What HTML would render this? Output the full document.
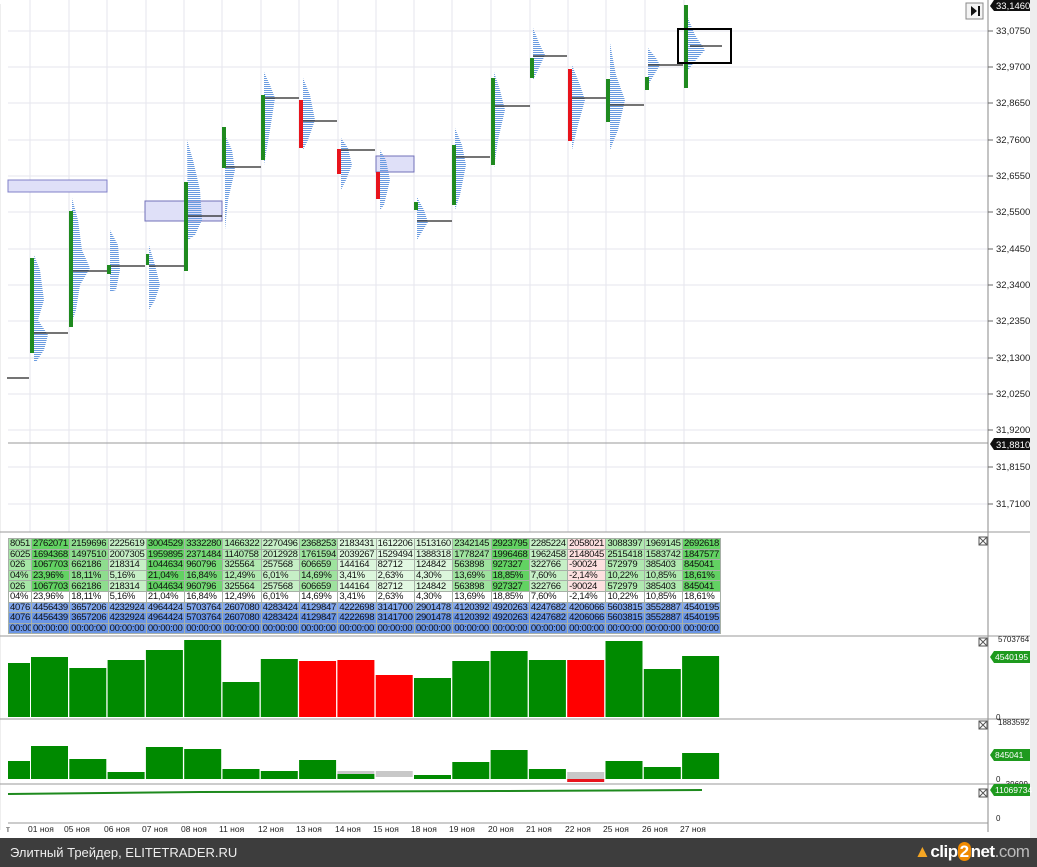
<!DOCTYPE html>
<html><head><meta charset="utf-8"><style>
body{margin:0;width:1037px;height:867px;overflow:hidden;background:#fff;font-family:"Liberation Sans",sans-serif;position:relative}
svg{position:absolute;left:0;top:0}
table{position:absolute;left:8px;top:538px;width:712px;border-collapse:collapse;table-layout:fixed;font-size:9.5px;letter-spacing:-0.3px;font-family:"Liberation Sans",sans-serif;}
td{border:1px solid #a7b0a7;height:9.6px;padding:0 0 0 1px;line-height:9px;overflow:hidden;white-space:nowrap;color:#111}
tr.w td{background:#fff}
tr.b1 td{background:#82a8ee}
tr.b2 td{background:#6a95e6}
.foot{position:absolute;left:0;top:838px;width:1037px;height:29px;background:#3d3d3d;color:#eee;font-size:13px}
</style></head><body>
<svg width="1037" height="867">
<defs>
<pattern id="pf" width="4" height="2" patternUnits="userSpaceOnUse"><rect width="4" height="1" fill="#6a9be0"/></pattern>
</defs>
<g stroke="#e6e6ee" stroke-width="1">
<line x1="8" y1="31" x2="988" y2="31"/><line x1="8" y1="67" x2="988" y2="67"/><line x1="8" y1="103" x2="988" y2="103"/><line x1="8" y1="140" x2="988" y2="140"/><line x1="8" y1="176" x2="988" y2="176"/><line x1="8" y1="212" x2="988" y2="212"/><line x1="8" y1="249" x2="988" y2="249"/><line x1="8" y1="285" x2="988" y2="285"/><line x1="8" y1="321" x2="988" y2="321"/><line x1="8" y1="358" x2="988" y2="358"/><line x1="8" y1="394" x2="988" y2="394"/><line x1="8" y1="430" x2="988" y2="430"/><line x1="8" y1="467" x2="988" y2="467"/><line x1="8" y1="504" x2="988" y2="504"/>
<line x1="30" y1="0" x2="30" y2="532"/><line x1="69" y1="0" x2="69" y2="532"/><line x1="107" y1="0" x2="107" y2="532"/><line x1="146" y1="0" x2="146" y2="532"/><line x1="184" y1="0" x2="184" y2="532"/><line x1="222" y1="0" x2="222" y2="532"/><line x1="261" y1="0" x2="261" y2="532"/><line x1="299" y1="0" x2="299" y2="532"/><line x1="338" y1="0" x2="338" y2="532"/><line x1="376" y1="0" x2="376" y2="532"/><line x1="414" y1="0" x2="414" y2="532"/><line x1="452" y1="0" x2="452" y2="532"/><line x1="491" y1="0" x2="491" y2="532"/><line x1="530" y1="0" x2="530" y2="532"/><line x1="568" y1="0" x2="568" y2="532"/><line x1="606" y1="0" x2="606" y2="532"/><line x1="645" y1="0" x2="645" y2="532"/><line x1="684" y1="0" x2="684" y2="532"/>
</g>
<line x1="0" y1="4" x2="0" y2="830" stroke="#ddd"/>
<rect x="8" y="180" width="99" height="12" fill="#dfe0f8" stroke="#8080c8"/>
<rect x="145" y="201" width="77" height="20" fill="#dfe0f8" stroke="#7070b8"/>
<rect x="376" y="156" width="38" height="16" fill="#dfe0f8" stroke="#7070b8"/>
<g fill="url(#pf)">
<polygon points="34,255 40,270 44,300 38,320 48,335 44,350 36,362 34,362"/>
<polygon points="72,198 78,220 82,250 90,268 80,285 76,310 72,322"/>
<polygon points="110,230 118,245 120,270 116,290 110,292"/>
<polygon points="149,245 155,265 160,285 155,300 149,310"/>
<polygon points="187,140 193,160 200,190 202,220 195,235 188,240"/>
<polygon points="225,135 232,150 235,170 228,200 225,230"/>
<polygon points="264,72 270,85 275,98 270,130 264,165"/>
<polygon points="303,78 310,95 315,120 308,140 303,150"/>
<polygon points="341,138 348,148 352,165 346,180 341,190"/>
<polygon points="380,150 386,160 390,180 384,205 380,210"/>
<polygon points="417,197 424,210 428,222 420,235 417,240"/>
<polygon points="455,128 462,145 466,165 460,195 455,210"/>
<polygon points="494,72 500,90 505,110 498,140 494,168"/>
<polygon points="533,28 540,45 545,55 538,70 533,80"/>
<polygon points="572,65 580,85 585,100 578,125 572,150"/>
<polygon points="610,43 616,75 625,100 618,130 610,150"/>
<polygon points="648,48 656,58 660,65 654,75 648,85"/>
<polygon points="688,18 695,35 705,50 696,60 688,70"/>
</g>
<g stroke="#222" stroke-width="1.2">
<line x1="7" y1="378" x2="29" y2="378"/>
<line x1="34" y1="333" x2="68" y2="333"/>
<line x1="72" y1="271" x2="107" y2="271"/>
<line x1="110" y1="266" x2="145" y2="266"/>
<line x1="149" y1="266" x2="184" y2="266"/>
<line x1="187" y1="216" x2="222" y2="216"/>
<line x1="226" y1="167" x2="261" y2="167"/>
<line x1="264" y1="98" x2="299" y2="98"/>
<line x1="303" y1="121" x2="337" y2="121"/>
<line x1="341" y1="150" x2="375" y2="150"/>
<line x1="417" y1="221" x2="452" y2="221"/>
<line x1="456" y1="157" x2="490" y2="157"/>
<line x1="494" y1="106" x2="530" y2="106"/>
<line x1="533" y1="56" x2="567" y2="56"/>
<line x1="572" y1="98" x2="606" y2="98"/>
<line x1="610" y1="105" x2="644" y2="105"/>
<line x1="648" y1="65" x2="683" y2="65"/>
<line x1="690" y1="46" x2="722" y2="46"/>
</g>
<g fill="#1f8a1f">
<rect x="30" y="258" width="4" height="95"/><rect x="69" y="211" width="4" height="116"/><rect x="107" y="265" width="4" height="9"/><rect x="146" y="254" width="3" height="11"/><rect x="184" y="182" width="4" height="89"/><rect x="222" y="127" width="4" height="41"/><rect x="261" y="95" width="4" height="65"/><rect x="414" y="202" width="4" height="8"/><rect x="452" y="145" width="4" height="60"/><rect x="491" y="78" width="4" height="87"/><rect x="530" y="58" width="4" height="20"/><rect x="606" y="79" width="4" height="43"/><rect x="645" y="77" width="4" height="13"/><rect x="684" y="5" width="4" height="83"/>
</g>
<g fill="#e8141c"><rect x="299" y="100" width="4" height="48"/><rect x="337" y="149" width="4" height="25"/><rect x="376" y="172" width="4" height="27"/><rect x="568" y="69" width="4" height="72"/></g>
<rect x="678" y="29" width="53" height="34" fill="none" stroke="#000" stroke-width="2"/>
<line x1="8" y1="443" x2="988" y2="443" stroke="#999"/>
<line x1="988" y1="0" x2="988" y2="832" stroke="#888"/>
<rect x="1030" y="0" width="7" height="838" fill="#eee"/>
<g font-size="9.5" fill="#222">
<text x="996" y="34">33,0750</text><text x="996" y="70">32,9700</text><text x="996" y="106">32,8650</text><text x="996" y="143">32,7600</text><text x="996" y="179">32,6550</text><text x="996" y="215">32,5500</text><text x="996" y="252">32,4450</text><text x="996" y="288">32,3400</text><text x="996" y="324">32,2350</text><text x="996" y="361">32,1300</text><text x="996" y="397">32,0250</text><text x="996" y="433">31,9200</text><text x="996" y="470">31,8150</text><text x="996" y="507">31,7100</text>
</g>
<g stroke="#666"><line x1="988" y1="31" x2="993" y2="31"/><line x1="988" y1="67" x2="993" y2="67"/><line x1="988" y1="103" x2="993" y2="103"/><line x1="988" y1="140" x2="993" y2="140"/><line x1="988" y1="176" x2="993" y2="176"/><line x1="988" y1="212" x2="993" y2="212"/><line x1="988" y1="249" x2="993" y2="249"/><line x1="988" y1="285" x2="993" y2="285"/><line x1="988" y1="321" x2="993" y2="321"/><line x1="988" y1="358" x2="993" y2="358"/><line x1="988" y1="394" x2="993" y2="394"/><line x1="988" y1="430" x2="993" y2="430"/><line x1="988" y1="467" x2="993" y2="467"/><line x1="988" y1="504" x2="993" y2="504"/></g>
<path d="M990,6 L994,0 L1030,0 L1030,11 L994,11 Z" fill="#111"/><text x="996" y="9" font-size="9.5" fill="#fff">33,1460</text>
<path d="M990,444 L994,438 L1030,438 L1030,450 L994,450 Z" fill="#111"/><text x="996" y="448" font-size="9.5" fill="#fff">31,8810</text>
<rect x="966" y="3" width="17" height="16" fill="#f4f4f4" stroke="#888"/><path d="M971,6 L977,11 L971,16 Z M978,6 h2 v10 h-2 Z" fill="#111"/>
<g stroke="#999"><line x1="0" y1="532" x2="1030" y2="532"/><line x1="0" y1="636" x2="1030" y2="636"/><line x1="0" y1="719" x2="1030" y2="719"/><line x1="0" y1="784" x2="1030" y2="784"/><line x1="8" y1="823" x2="988" y2="823"/></g>
<g fill="#fff" stroke="#555"><rect x="979" y="537" width="8" height="8"/><rect x="979" y="638" width="8" height="8"/><rect x="979" y="721" width="8" height="8"/><rect x="979" y="789" width="8" height="8"/></g>
<g stroke="#555"><path d="M979,537 l8,8 M987,537 l-8,8 M979,638 l8,8 M987,638 l-8,8 M979,721 l8,8 M987,721 l-8,8 M979,789 l8,8 M987,789 l-8,8"/></g>
<!-- volume -->
<g fill="#008a00">
<rect x="8" y="663" width="22" height="54"/>
<rect x="31" y="657" width="37" height="60"/><rect x="69.3" y="668" width="37" height="49"/><rect x="107.6" y="660" width="37" height="57"/><rect x="145.9" y="650" width="37" height="67"/><rect x="184.2" y="640" width="37" height="77"/><rect x="222.5" y="682" width="37" height="35"/><rect x="260.8" y="659" width="37" height="58"/><rect x="414" y="678" width="37" height="39"/><rect x="452.3" y="661" width="37" height="56"/><rect x="490.6" y="651" width="37" height="66"/><rect x="528.9" y="660" width="37" height="57"/><rect x="605.5" y="641" width="37" height="76"/><rect x="643.8" y="669" width="37" height="48"/><rect x="682.1" y="656" width="37" height="61"/>
</g>
<g fill="#ff0000"><rect x="299.1" y="661" width="37" height="56"/><rect x="337.4" y="660" width="37" height="57"/><rect x="375.7" y="675" width="37" height="42"/><rect x="567.2" y="660" width="37" height="57"/></g>
<text x="998" y="642" font-size="8" fill="#222">5703764</text><text x="996" y="720" font-size="8" fill="#222">0</text>
<path d="M990,657 L994,651 L1030,651 L1030,663 L994,663 Z" fill="#1e9a1e"/><text x="995" y="660" font-size="8.5" fill="#fff">4540195</text>
<!-- delta -->
<g fill="#008a00">
<rect x="8" y="761" width="22" height="18"/>
<rect x="31" y="746" width="37" height="33"/><rect x="69.3" y="759" width="37" height="20"/><rect x="107.6" y="772" width="37" height="7"/><rect x="145.9" y="747" width="37" height="32"/><rect x="184.2" y="749" width="37" height="30"/><rect x="222.5" y="769" width="37" height="10"/><rect x="260.8" y="771" width="37" height="8"/><rect x="299.1" y="760" width="37" height="19"/><rect x="337.4" y="774" width="37" height="5"/><rect x="414" y="775" width="37" height="4"/><rect x="452.3" y="762" width="37" height="17"/><rect x="490.6" y="750" width="37" height="29"/><rect x="528.9" y="769" width="37" height="10"/><rect x="605.5" y="761" width="37" height="18"/><rect x="643.8" y="767" width="37" height="12"/><rect x="682.1" y="753" width="37" height="26"/>
</g>
<rect x="337.4" y="771" width="37" height="3" fill="#c8c8c8"/><rect x="375.7" y="771" width="37" height="6" fill="#c8c8c8"/>
<rect x="567.2" y="772" width="37" height="7" fill="#c8c8c8"/><rect x="567.2" y="779" width="37" height="3" fill="#e8141c"/>
<text x="998" y="725" font-size="8" fill="#222">1883592</text><text x="996" y="782" font-size="8" fill="#222">0</text><text x="1003" y="787" font-size="8" fill="#222">-39699</text>
<path d="M990,755 L994,749 L1030,749 L1030,761 L994,761 Z" fill="#1e9a1e"/><text x="995" y="758" font-size="8.5" fill="#fff">845041</text>
<path d="M8,794 L200,792 L500,791 L702,790" stroke="#1e8a1e" stroke-width="2" fill="none"/>
<path d="M990,790 L994,784 L1030,784 L1030,796 L994,796 Z" fill="#1e9a1e"/><text x="995" y="793" font-size="8.5" fill="#fff">11069734</text>
<text x="996" y="821" font-size="8" fill="#222">0</text>
<g font-size="8.5" fill="#222">
<text x="6" y="832">т</text><text x="28" y="832">01 ноя</text><text x="64" y="832">05 ноя</text><text x="104" y="832">06 ноя</text><text x="142" y="832">07 ноя</text><text x="181" y="832">08 ноя</text><text x="219" y="832">11 ноя</text><text x="258" y="832">12 ноя</text><text x="296" y="832">13 ноя</text><text x="335" y="832">14 ноя</text><text x="373" y="832">15 ноя</text><text x="411" y="832">18 ноя</text><text x="449" y="832">19 ноя</text><text x="488" y="832">20 ноя</text><text x="526" y="832">21 ноя</text><text x="565" y="832">22 ноя</text><text x="603" y="832">25 ноя</text><text x="642" y="832">26 ноя</text><text x="680" y="832">27 ноя</text>
</g>
</svg>
<table>
<colgroup><col style="width:23px;background:#a6e6a6"><col style="width:38.3px;background:#62d262"><col style="width:38.3px;background:#8edd8e"><col style="width:38.3px;background:#c6efc6"><col style="width:38.3px;background:#62d262"><col style="width:38.3px;background:#74d874"><col style="width:38.3px;background:#b0e9b0"><col style="width:38.3px;background:#c6efc6"><col style="width:38.3px;background:#9ee39e"><col style="width:38.3px;background:#dcf6dc"><col style="width:38.3px;background:#e2f8e2"><col style="width:38.3px;background:#dcf6dc"><col style="width:38.3px;background:#9ee39e"><col style="width:38.3px;background:#62d262"><col style="width:38.3px;background:#c6efc6"><col style="width:38.3px;background:#fde0e0"><col style="width:38.3px;background:#b0e9b0"><col style="width:38.3px;background:#b0e9b0"><col style="width:38.3px;background:#62d262"></colgroup>
<tr><td>8051</td><td>2762071</td><td>2159696</td><td>2225619</td><td>3004529</td><td>3332280</td><td>1466322</td><td>2270496</td><td>2368253</td><td>2183431</td><td>1612206</td><td>1513160</td><td>2342145</td><td>2923795</td><td>2285224</td><td>2058021</td><td>3088397</td><td>1969145</td><td>2692618</td></tr>
<tr><td>6025</td><td>1694368</td><td>1497510</td><td>2007305</td><td>1959895</td><td>2371484</td><td>1140758</td><td>2012928</td><td>1761594</td><td>2039267</td><td>1529494</td><td>1388318</td><td>1778247</td><td>1996468</td><td>1962458</td><td>2148045</td><td>2515418</td><td>1583742</td><td>1847577</td></tr>
<tr><td>026</td><td>1067703</td><td>662186</td><td>218314</td><td>1044634</td><td>960796</td><td>325564</td><td>257568</td><td>606659</td><td>144164</td><td>82712</td><td>124842</td><td>563898</td><td>927327</td><td>322766</td><td>-90024</td><td>572979</td><td>385403</td><td>845041</td></tr>
<tr><td>04%</td><td>23,96%</td><td>18,11%</td><td>5,16%</td><td>21,04%</td><td>16,84%</td><td>12,49%</td><td>6,01%</td><td>14,69%</td><td>3,41%</td><td>2,63%</td><td>4,30%</td><td>13,69%</td><td>18,85%</td><td>7,60%</td><td>-2,14%</td><td>10,22%</td><td>10,85%</td><td>18,61%</td></tr>
<tr><td>026</td><td>1067703</td><td>662186</td><td>218314</td><td>1044634</td><td>960796</td><td>325564</td><td>257568</td><td>606659</td><td>144164</td><td>82712</td><td>124842</td><td>563898</td><td>927327</td><td>322766</td><td>-90024</td><td>572979</td><td>385403</td><td>845041</td></tr>
<tr class="w"><td>04%</td><td>23,96%</td><td>18,11%</td><td>5,16%</td><td>21,04%</td><td>16,84%</td><td>12,49%</td><td>6,01%</td><td>14,69%</td><td>3,41%</td><td>2,63%</td><td>4,30%</td><td>13,69%</td><td>18,85%</td><td>7,60%</td><td>-2,14%</td><td>10,22%</td><td>10,85%</td><td>18,61%</td></tr>
<tr class="b1"><td>4076</td><td>4456439</td><td>3657206</td><td>4232924</td><td>4964424</td><td>5703764</td><td>2607080</td><td>4283424</td><td>4129847</td><td>4222698</td><td>3141700</td><td>2901478</td><td>4120392</td><td>4920263</td><td>4247682</td><td>4206066</td><td>5603815</td><td>3552887</td><td>4540195</td></tr>
<tr class="b2"><td>4076</td><td>4456439</td><td>3657206</td><td>4232924</td><td>4964424</td><td>5703764</td><td>2607080</td><td>4283424</td><td>4129847</td><td>4222698</td><td>3141700</td><td>2901478</td><td>4120392</td><td>4920263</td><td>4247682</td><td>4206066</td><td>5603815</td><td>3552887</td><td>4540195</td></tr>
<tr class="b2"><td>00:00</td><td>00:00:00</td><td>00:00:00</td><td>00:00:00</td><td>00:00:00</td><td>00:00:00</td><td>00:00:00</td><td>00:00:00</td><td>00:00:00</td><td>00:00:00</td><td>00:00:00</td><td>00:00:00</td><td>00:00:00</td><td>00:00:00</td><td>00:00:00</td><td>00:00:00</td><td>00:00:00</td><td>00:00:00</td><td>00:00:00</td></tr>
</table>
<div class="foot"><span style="position:absolute;left:10px;top:7px">Элитный Трейдер, ELITETRADER.RU</span>
<span style="position:absolute;left:914px;top:4px;font-size:17px;color:#ddd;letter-spacing:-0.5px"><span style="color:#f5a623">▲</span><b style="color:#fff">clip<span style="background:#f08a00;border-radius:8px;padding:0 2px">2</span>net</b><span style="color:#bbb">.com</span></span></div>
</body></html>
